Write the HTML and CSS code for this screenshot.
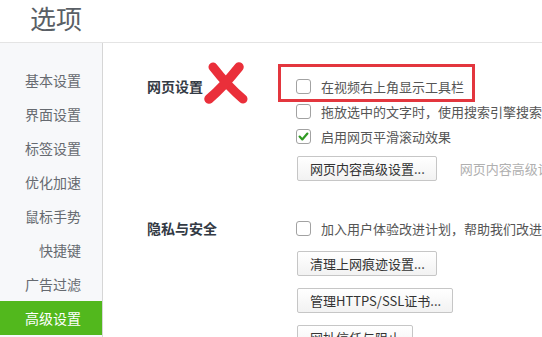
FILE: index.html
```html
<!DOCTYPE html>
<html lang="zh-CN">
<head>
<meta charset="utf-8">
<title>选项</title>
<link rel="stylesheet" href="styles.css">
</head>
<body>
<div class="page">
  <header class="header"><h1 class="title">选项</h1></header>
  <div class="body">
    <nav class="sidebar">
      <div class="nav-item">基本设置</div>
      <div class="nav-item">界面设置</div>
      <div class="nav-item">标签设置</div>
      <div class="nav-item">优化加速</div>
      <div class="nav-item">鼠标手势</div>
      <div class="nav-item">快捷键</div>
      <div class="nav-item">广告过滤</div>
      <div class="nav-item active">高级设置</div>
    </nav>
    <main class="content">
      <section class="section first">
        <div class="label">网页设置</div>
        <div class="items">
          <label class="check-row"><span class="box"></span><span>在视频右上角显示工具栏</span></label>
          <label class="check-row"><span class="box"></span><span>拖放选中的文字时，使用搜索引擎搜索</span></label>
          <label class="check-row"><span class="box checked"><svg viewBox="0 0 15 15" width="15" height="15"><path d="M3.6 7.6 L6.3 10.4 L11.4 4.6" fill="none" stroke="#2f9a22" stroke-width="2.2" stroke-linecap="round" stroke-linejoin="round"/></svg></span><span>启用网页平滑滚动效果</span></label>
          <div class="btn-row"><button class="btn">网页内容高级设置...</button><span class="hint">网页内容高级设置</span></div>
        </div>
        <svg class="mark" viewBox="0 0 46 44" width="46" height="44">
          <path d="M10 6 C17 15 27 27 40 38" fill="none" stroke="#ea2f3a" stroke-width="9" stroke-linecap="round"/>
          <path d="M36 6 C28 16 18 28 6 38" fill="none" stroke="#ea2f3a" stroke-width="9.5" stroke-linecap="round"/>
        </svg>
        <div class="highlight"></div>
      </section>
      <section class="section second">
        <div class="label">隐私与安全</div>
        <div class="items">
          <label class="check-row"><span class="box"></span><span>加入用户体验改进计划，帮助我们改进产品</span></label>
          <div class="btn-stack">
            <button class="btn">清理上网痕迹设置...</button>
            <button class="btn">管理HTTPS/SSL证书...</button>
            <button class="btn">网址信任与阻止</button>
          </div>
        </div>
      </section>
    </main>
  </div>
</div>
</body>
</html>
```
FILE: styles.css
```css
html, body {
  margin: 0;
  padding: 0;
  background: #fff;
  overflow: hidden;
}
body {
  width: 542px;
  height: 337px;
  font-family: "Noto Sans CJK SC", "Liberation Sans", sans-serif;
  color: #555;
}
.page {
  display: flex;
  flex-direction: column;
  height: 337px;
}
.header {
  height: 42px;
  border-bottom: 1px solid #e4e4e4;
  display: flex;
  align-items: center;
  padding-left: 30px;
  box-sizing: content-box;
}
.title {
  margin: 0;
  font-size: 26px;
  font-weight: 400;
  color: #5a5f66;
  line-height: 1;
  margin-top: -6px;
}
.body {
  display: flex;
  flex: 1;
  min-height: 0;
}
.sidebar {
  width: 102px;
  flex: none;
  background: #f7f8fa;
  border-right: 1px solid #d6d6d6;
  padding-top: 20px;
  display: flex;
  flex-direction: column;
}
.nav-item {
  height: 34px;
  line-height: 34px;
  text-align: right;
  padding-right: 21px;
  font-size: 14px;
  color: #666a70;
  flex: none;
}
.nav-item.active {
  background: #52b81d;
  color: #fff;
}
.content {
  flex: 1;
  padding-left: 44px;
  padding-top: 31px;
  position: relative;
  min-width: 0;
}
.section {
  display: grid;
  grid-template-columns: 149px auto;
  position: relative;
}
.section.second {
  margin-top: 35px;
}
.label {
  font-size: 14px;
  font-weight: 700;
  color: #333a44;
  line-height: 25px;
}
.items {
  display: flex;
  flex-direction: column;
  white-space: nowrap;
}
.check-row {
  display: flex;
  align-items: center;
  height: 25px;
  font-size: 13px;
  color: #555;
}
.box {
  width: 13px;
  height: 13px;
  border: 1px solid #a2a2a2;
  border-radius: 3px;
  background: #fff;
  margin-right: 10px;
  flex: none;
  position: relative;
}
.box svg {
  position: absolute;
  left: -1px;
  top: -1px;
}
.btn-row {
  margin-top: 7px;
  display: flex;
  align-items: center;
}
.btn {
  height: 25px;
  padding: 0 11px 0 12px;
  border: 1px solid #c6c6c6;
  border-radius: 2px;
  background: linear-gradient(#ffffff, #f2f2f2);
  font-family: inherit;
  font-size: 13px;
  color: #333;
  margin-left: 1px;
  line-height: 23px;
  white-space: nowrap;
}
.hint {
  margin-left: 23px;
  font-size: 13px;
  color: #b0b0b0;
}
.btn-stack {
  margin-top: 10px;
  display: flex;
  flex-direction: column;
  align-items: flex-start;
  gap: 12px;
}
.mark {
  position: absolute;
  left: 56px;
  top: -13px;
}
.highlight {
  position: absolute;
  left: 131px;
  top: -10px;
  width: 191px;
  height: 32px;
  border: 3px solid #e3363e;
}
```
